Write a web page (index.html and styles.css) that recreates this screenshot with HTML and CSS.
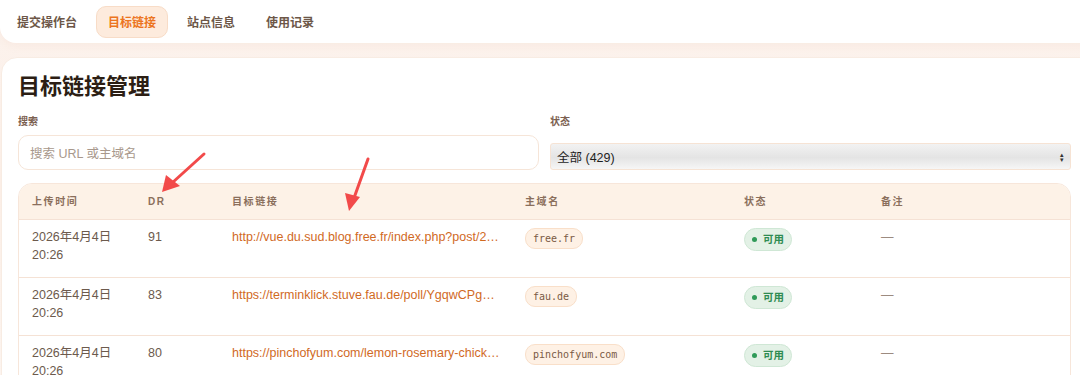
FILE: index.html
```html
<!DOCTYPE html>
<html lang="zh-CN">
<head>
  <meta charset="UTF-8" />
  <title>目标链接管理</title>
  <link rel="stylesheet" href="styles.css">
</head>
<body>
  <!-- Top navigation tabs -->
  <nav class="nav-card">
    <a class="tab">提交操作台</a>
    <a class="tab active">目标链接</a>
    <a class="tab">站点信息</a>
    <a class="tab">使用记录</a>
  </nav>

  <main class="main-card">
    <h1 class="title">目标链接管理</h1>

    <div class="filters">
      <div class="field">
        <label class="field-label">搜索</label>
        <div class="search-input">搜索 URL 或主域名</div>
      </div>
      <div class="field">
        <label class="field-label">状态</label>
        <div class="select">
          <span>全部 (429)</span>
          <span class="select-arrows">▴<br>▾</span>
        </div>
      </div>
    </div>

    <div class="table">
      <div class="row head">
        <div>上传时间</div>
        <div>DR</div>
        <div>目标链接</div>
        <div>主域名</div>
        <div>状态</div>
        <div>备注</div>
      </div>
      <div class="row">
        <div class="date">2026年4月4日<br>20:26</div>
        <div class="dr">91</div>
        <div class="url">http://vue.du.sud.blog.free.fr/index.php?post/2016/01/10/Ne-pas-oublier</div>
        <div><span class="domain">free.fr</span></div>
        <div><span class="status"><i class="dot"></i>可用</span></div>
        <div class="note">—</div>
      </div>
      <div class="row">
        <div class="date">2026年4月4日<br>20:26</div>
        <div class="dr">83</div>
        <div class="url">https://terminklick.stuve.fau.de/poll/YgqwCPgKq5xA</div>
        <div><span class="domain">fau.de</span></div>
        <div><span class="status"><i class="dot"></i>可用</span></div>
        <div class="note">—</div>
      </div>
      <div class="row">
        <div class="date">2026年4月4日<br>20:26</div>
        <div class="dr">80</div>
        <div class="url">https://pinchofyum.com/lemon-rosemary-chicken-recipe</div>
        <div><span class="domain">pinchofyum.com</span></div>
        <div><span class="status"><i class="dot"></i>可用</span></div>
        <div class="note">—</div>
      </div>
    </div>
  </main>

  <!-- Annotation arrows drawn over the screenshot -->
  <svg class="arrows" width="1080" height="375" viewBox="0 0 1080 375">
    <line x1="204" y1="154" x2="172" y2="183" stroke="#f24a4a" stroke-width="3" stroke-linecap="round"/>
    <polygon points="162,192 166,175 180,186" fill="#f24a4a"/>
    <line x1="368" y1="159" x2="354" y2="198" stroke="#f24a4a" stroke-width="3" stroke-linecap="round"/>
    <polygon points="349,211 345,193 360,197" fill="#f24a4a"/>
  </svg>
</body>
</html>
```

FILE: styles.css
```css
* {
  margin: 0;
  padding: 0;
  box-sizing: border-box;
}
body {
  width: 1080px;
  height: 375px;
  overflow: hidden;
  position: relative;
  font-family: "Liberation Sans", "Noto Sans CJK SC", sans-serif;
  background: linear-gradient(180deg, #fcf3ee 0%, #fbeee6 50%, #fcf4ef 100%);
  color: #3a2a1e;
}
/* Navigation */
.nav-card {
  display: flex;
  align-items: center;
  gap: 7px;
  height: 43px;
  margin-right: -30px;
  padding: 0 5px;
  background: #fff;
  border-radius: 0 0 16px 16px;
  box-shadow: 0 2px 10px rgba(220, 170, 140, 0.12);
}
.tab {
  display: flex;
  align-items: center;
  height: 32px;
  padding: 0 11px;
  font-size: 12px;
  font-weight: 700;
  color: #6d5748;
  border: 1px solid transparent;
  border-radius: 10px;
}
.tab.active {
  color: #ec7420;
  background: #fdebdd;
  border-color: #f8dcc7;
}
/* Main card */
.main-card {
  margin: 14px -30px 0 1px;
  padding: 14px 40px 0 16px;
  height: 400px;
  background: #fff;
  border: 1px solid #f8ece3;
  border-radius: 16px;
}
.title {
  font-size: 22px;
  line-height: 30px;
  font-weight: 700;
  color: #2c1e14;
}
.filters {
  display: grid;
  grid-template-columns: 521px 521px;
  gap: 11px;
  margin-top: 13px;
}
.field {
  display: flex;
  flex-direction: column;
}
.field-label {
  font-size: 10px;
  line-height: 14px;
  font-weight: 700;
  color: #7b6050;
  margin-bottom: 6px;
}
.search-input {
  height: 35px;
  padding: 0 11px;
  display: flex;
  align-items: center;
  font-size: 12.5px;
  color: #a8988c;
  border: 1px solid #f6e5d8;
  border-radius: 10px;
}
.select {
  margin-top: auto;
  height: 27px;
  padding: 0 6px;
  display: flex;
  align-items: center;
  justify-content: space-between;
  font-size: 12.5px;
  color: #1e1e1e;
  background: linear-gradient(180deg, #f2f2f2 0%, #e4e4e4 55%, #f6f6f6 100%);
  border: 1px solid #f6e3d4;
  border-radius: 3px;
}
.select-arrows {
  font-size: 7px;
  line-height: 5px;
  color: #333;
}
/* Table */
.table {
  margin-top: 13px;
  width: 1053px;
  border: 1px solid #f7e6da;
  border-radius: 14px;
  overflow: hidden;
}
.row {
  display: grid;
  grid-template-columns: 116px 84px 293px 219px 137px 204px;
  height: 58px;
  padding-top: 8px;
  font-size: 12.5px;
  line-height: 18px;
  border-top: 1px solid #f5e2d5;
}
.row > div {
  padding-left: 13px;
  min-width: 0;
}
.row.head {
  height: 35px;
  padding-top: 0;
  align-items: center;
  background: #fdf2e7;
  border-top: none;
  font-size: 10px;
  font-weight: 700;
  letter-spacing: 1.6px;
  color: #8b6f5c;
}
.date, .dr {
  color: #6c5a4d;
}
.url {
  color: #d16a1f;
  white-space: nowrap;
  overflow: hidden;
  text-overflow: ellipsis;
  padding-right: 12px;
}
.domain {
  display: inline-block;
  padding: 1px 7px;
  font-family: "DejaVu Sans Mono", monospace;
  font-size: 10px;
  line-height: 17px;
  color: #7a5a44;
  background: #fef1e5;
  border: 1px solid #f9dfc9;
  border-radius: 10px;
}
.status {
  display: inline-flex;
  align-items: center;
  gap: 6px;
  padding: 2px 7px 2px 7px;
  font-size: 10.5px;
  font-weight: 700;
  line-height: 17px;
  color: #2f8c52;
  background: #e3f1e6;
  border: 1px solid #cfe7d5;
  border-radius: 12px;
}
.dot {
  width: 5px;
  height: 5px;
  border-radius: 50%;
  background: #2f9a58;
}
.note {
  color: #9c8b80;
}
/* Annotation overlay */
.arrows {
  position: absolute;
  top: 0;
  left: 0;
  pointer-events: none;
}
```
